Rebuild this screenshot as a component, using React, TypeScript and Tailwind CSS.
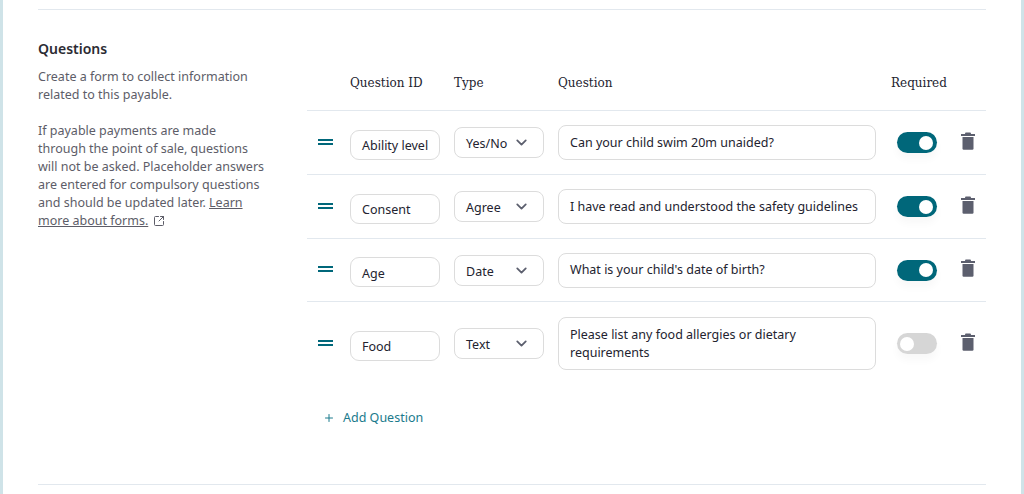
import { ChevronDown, Plus, SquareArrowOutUpRight } from "lucide-react";

const rows = [
  { id: "Ability level", type: "Yes/No", question: "Can your child swim 20m unaided?", required: true, height: "h-[64px]" },
  { id: "Consent", type: "Agree", question: "I have read and understood the safety guidelines", required: true, height: "h-[64px]" },
  { id: "Age", type: "Date", question: "What is your child's date of birth?", required: true, height: "h-[63px]" },
  { id: "Food", type: "Text", question: "Please list any food allergies or dietary requirements", required: false, height: "pt-[15px]" },
];

function Toggle({ on }: { on: boolean }) {
  return (
    <div className={`flex h-[21px] w-10 items-center rounded-full shadow-[0_6px_8px_rgba(0,0,0,0.03)] ${on ? "justify-end bg-[#00677a] pr-1" : "justify-start bg-[#d6d6d6] pl-[3px]"}`}>
      <div className="h-[14px] w-[14px] rounded-full bg-white" />
    </div>
  );
}

function TrashIcon() {
  return (
    <svg width="14" height="18" viewBox="0 0 14 18" fill="#5c5f6e">
      <rect x="0" y="2" width="14" height="2" />
      <rect x="4" y="0.5" width="6" height="2" rx="1" />
      <path d="M1.5 5h11v11.5a1.2 1.2 0 0 1-1.2 1.2H2.7a1.2 1.2 0 0 1-1.2-1.2z" />
    </svg>
  );
}

function Row({ row, last }: { row: (typeof rows)[number]; last: boolean }) {
  return (
    <div className={`flex items-center ${row.height} ${last ? "" : "border-b border-[#e2e8ee]"}`}>
      <div className="flex w-[43px] justify-center pr-[6px]">
        <div className="mb-[2px] flex w-[15px] flex-col gap-[2px]">
          <div className="h-[2px] bg-[#00677a]" />
          <div className="h-[2px] bg-[#00677a]" />
        </div>
      </div>
      <div className="mt-[4px] flex h-[30px] w-[90px] items-center whitespace-nowrap rounded-[9px] border border-[#dcdcdc] px-[11px] pt-[4px] text-[#23232f]">
        {row.id}
      </div>
      <div className="ml-[14px] flex h-[31px] w-[90px] items-center justify-between rounded-[8px] border border-[#dcdcdc] pr-[13px] pl-[11px] text-[#23232f]">
        <span className="pt-[4px]">{row.type}</span>
        <ChevronDown size={17} strokeWidth={2.5} className="text-[#5c5f6e]" />
      </div>
      <div className="ml-[14px] flex min-h-[35px] w-[318px] items-center rounded-[8px] border border-[#dcdcdc] px-[11px] py-[7.5px] leading-[18px] text-[#23232f]">
        {row.question}
      </div>
      <div className="ml-[21px]">
        <Toggle on={row.required} />
      </div>
      <div className="mb-1 ml-[24px]">
        <TrashIcon />
      </div>
    </div>
  );
}

export default function App() {
  return (
    <div className="h-[494px] w-[1024px] overflow-hidden border-r-[3px] border-l-[3px] border-[#cfe3e8] bg-white font-['Noto_Sans',sans-serif] text-[12.5px]">
      <div className="mx-[35px] mt-[9px] flex h-[476px] w-[948px] border-y border-[#e2e8ee]">
        <div className="w-[269px] pt-[29px] text-[#5d5d68]">
          <h2 className="text-sm font-semibold leading-5 text-[#2b2b33]">Questions</h2>
          <p className="mt-[9px] w-[227px] leading-[18px]">
            Create a form to collect information related to this payable.
          </p>
          <p className="mt-[18px] w-[227px] leading-[18px]">
            If payable payments are made through the point of sale, questions will not be asked. Placeholder answers are entered for compulsory questions and should be updated later.{" "}
            <span className="underline">Learn more about forms.</span>
            <SquareArrowOutUpRight size={12} className="ml-[5px] inline align-[-2px]" />
          </p>
        </div>
        <div className="w-[679px]">
          <div className="flex h-[101px] items-start border-b border-[#e2e8ee] pt-[64px] font-['DejaVu_Serif',serif] text-[12px] text-[#23232f]">
            <div className="ml-[43px] w-[104px]">Question ID</div>
            <div className="w-[104px]">Type</div>
            <div className="w-[333px]">Question</div>
            <div>Required</div>
          </div>
          {rows.map((row, i) => (
            <Row key={row.id} row={row} last={i === rows.length - 1} />
          ))}
          <div className="mt-[39px] ml-[16px] flex items-center gap-[8px] text-[#1a7a8c]">
            <Plus size={12} />
            <span>Add Question</span>
          </div>
        </div>
      </div>
    </div>
  );
}
